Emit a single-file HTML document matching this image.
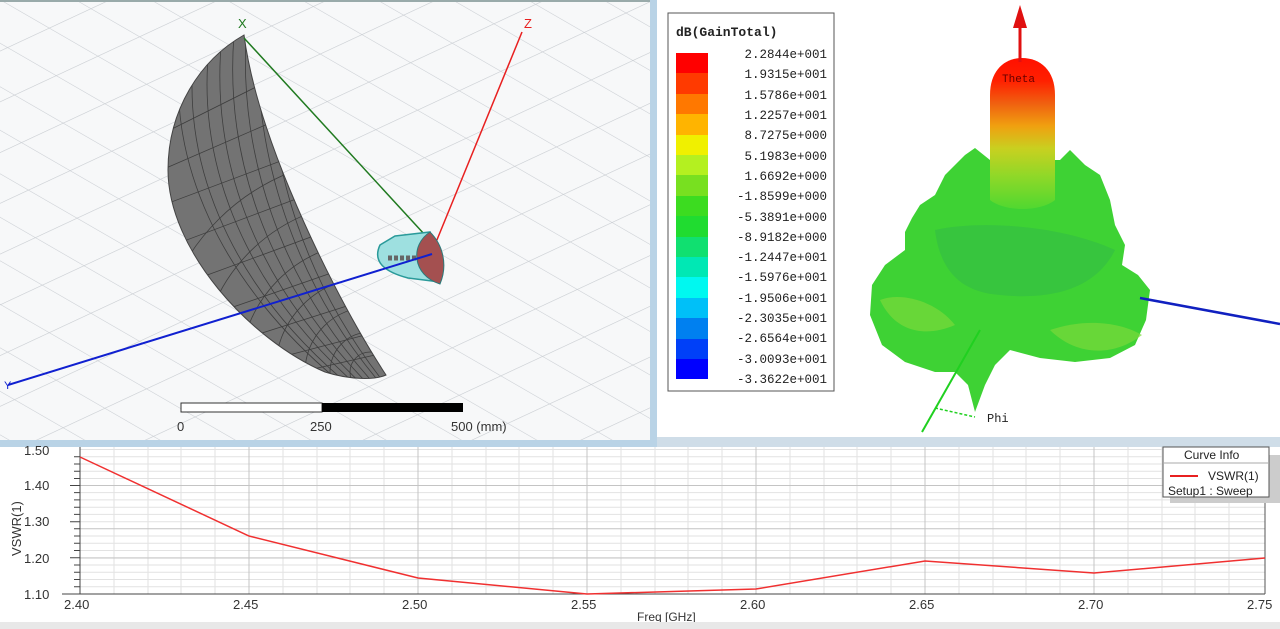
<!DOCTYPE html>
<html><head><meta charset="utf-8"><style>
html,body{margin:0;padding:0;width:1280px;height:629px;overflow:hidden;background:#fff;font-family:"Liberation Sans",sans-serif}
svg{position:absolute;left:0;top:0}
</style></head><body>
<svg width="1280" height="629" viewBox="0 0 1280 629" xmlns="http://www.w3.org/2000/svg">
<defs>
<pattern id="g" width="46" height="46" patternUnits="userSpaceOnUse" patternTransform="rotate(-25) skewX(35)">
<path d="M0 0H46M0 0V46" stroke="#c9cdd2" stroke-width="1.3" fill="none"/>
</pattern>
<clipPath id="lc"><rect x="0" y="0" width="650" height="440"/></clipPath>
<clipPath id="dc"><path d="M244 35 C200 60 168 110 168 170 C168 250 250 340 325 372 C350 380 375 380 386 375 C350 320 315 250 290 190 C265 130 250 80 244 35Z"/></clipPath>
<linearGradient id="beam" x1="0" y1="0" x2="0" y2="1">
<stop offset="0" stop-color="#ff1000"/><stop offset="0.15" stop-color="#ff2000"/>
<stop offset="0.3" stop-color="#f06010"/><stop offset="0.45" stop-color="#f0a010"/>
<stop offset="0.6" stop-color="#c8d020"/><stop offset="0.78" stop-color="#90d828"/><stop offset="1" stop-color="#50d830"/>
</linearGradient>
</defs>
<!-- left panel -->
<rect x="0" y="0" width="650" height="440" fill="#f7f8f9"/>
<rect x="0" y="0" width="650" height="440" fill="url(#g)"/>
<rect x="650" y="0" width="7" height="447" fill="#b9d3e6"/>
<rect x="0" y="440" width="657" height="7" fill="#b9d3e6"/>
<rect x="0" y="0" width="650" height="2" fill="#9aa"/>
<g clip-path="url(#lc)">
<path d="M244 35 C200 60 168 110 168 170 C168 250 250 340 325 372 C350 380 375 380 386 375 C350 320 315 250 290 190 C265 130 250 80 244 35Z" fill="#737373" stroke="#444" stroke-width="1"/>
<g stroke="#3e3e3e" stroke-width="0.8" fill="none" clip-path="url(#dc)">
<path d="M180 60 C170 150 210 280 350 390"/><path d="M195 45 C180 150 220 280 355 390"/>
<path d="M210 40 C195 150 235 280 362 390"/><path d="M222 35 C210 150 248 280 368 390"/>
<path d="M234 35 C225 150 262 280 374 390"/><path d="M246 35 C240 150 276 280 380 390"/>
<path d="M258 40 C255 150 290 280 386 390"/><path d="M270 60 C270 160 300 280 390 390"/>
<path d="M150 140 L290 70"/><path d="M150 175 L300 110"/><path d="M150 210 L310 150"/><path d="M160 250 L320 190"/><path d="M180 285 L330 230"/><path d="M210 315 L340 270"/><path d="M240 340 L350 305"/><path d="M270 360 L365 335"/><path d="M300 372 L375 355"/>
<circle cx="370" cy="372" r="20"/><circle cx="370" cy="372" r="40"/><circle cx="370" cy="372" r="65"/><circle cx="370" cy="372" r="95"/><circle cx="370" cy="372" r="130"/><circle cx="370" cy="372" r="170"/><circle cx="370" cy="372" r="215"/>
</g>
<line x1="244" y1="38" x2="425" y2="235" stroke="#207a20" stroke-width="1.5"/>
<text x="238" y="28" fill="#207a20" font-size="13">X</text>
<line x1="432" y1="252" x2="522" y2="32" stroke="#e82020" stroke-width="1.5"/>
<text x="524" y="28" fill="#e82020" font-size="13">Z</text>
<path d="M395 236 L430 232 L440 282 L408 278 C385 272 372 262 380 245Z" fill="#9ee0e0" stroke="#2a9a9a" stroke-width="1.5"/>
<path d="M388 258 h30" stroke="#666" stroke-width="5" stroke-dasharray="4 2"/>
<path d="M430 232 C410 245 412 275 440 284 C448 265 443 245 430 232Z" fill="#a45050" stroke="#2a7a7a"/>
<line x1="8" y1="385" x2="432" y2="254" stroke="#1020d0" stroke-width="2"/>
<text x="4" y="389" fill="#1020d0" font-size="11">Y</text>
</g>
<rect x="181" y="403" width="141" height="9" fill="#fff" stroke="#333"/>
<rect x="322" y="403" width="141" height="9" fill="#000"/>
<g font-size="13" fill="#333"><text x="177" y="431">0</text><text x="310" y="431">250</text><text x="451" y="431">500 (mm)</text></g>
<!-- right panel -->
<rect x="657" y="0" width="623" height="437" fill="#fff"/>
<rect x="657" y="437" width="623" height="10" fill="#cfdde8"/>
<path d="M965 155 L975 148 L990 160 L1060 160 L1070 150 L1085 165 L1100 175 L1110 200 L1115 225 L1125 245 L1122 265 L1138 275 L1150 290 L1146 320 L1135 345 L1110 358 L1075 362 L1040 358 L1010 350 L995 365 L985 385 L975 412 L968 385 L955 372 L935 372 L905 362 L882 345 L870 315 L872 285 L885 265 L905 250 L905 232 L912 218 L920 205 L935 195 L945 175 Z" fill="#3ed234"/>
<path d="M935 230 C980 220 1060 225 1115 250 C1095 290 1050 300 1000 295 C960 292 940 270 935 230Z" fill="#30b848" opacity="0.5"/>
<path d="M880 300 C900 292 935 300 955 325 C925 338 895 332 880 300Z" fill="#7ad83a" opacity="0.7"/>
<path d="M1050 330 C1085 318 1120 322 1142 335 C1112 358 1075 355 1050 330Z" fill="#7ad83a" opacity="0.7"/>
<path d="M990 200 L990 95 C990 70 1005 58 1022 58 C1040 58 1055 70 1055 95 L1055 200 C1040 212 1005 212 990 200Z" fill="url(#beam)"/>
<line x1="1020" y1="12" x2="1020" y2="62" stroke="#e01010" stroke-width="3"/>
<path d="M1013 28 L1020 5 L1027 28Z" fill="#e01010"/>
<text x="1002" y="82" font-family="Liberation Mono,monospace" font-size="11" fill="#600">Theta</text>
<line x1="1140" y1="298" x2="1280" y2="324" stroke="#1020c0" stroke-width="2.5"/>
<line x1="980" y1="330" x2="922" y2="432" stroke="#20d020" stroke-width="2"/>
<line x1="935" y1="408" x2="975" y2="417" stroke="#20d020" stroke-width="1.5" stroke-dasharray="3 2"/>
<text x="987" y="422" font-family="Liberation Mono,monospace" font-size="12" fill="#222">Phi</text>
<!-- legend -->
<rect x="668" y="13" width="166" height="378" fill="#fff" stroke="#555"/>
<text x="676" y="36" font-family="Liberation Mono,monospace" font-weight="bold" font-size="13" fill="#222">dB(GainTotal)</text>
<g>
<rect x="676" y="53" width="32" height="20" fill="#ff0000"/>
<rect x="676" y="73" width="32" height="21" fill="#ff3a00"/>
<rect x="676" y="94" width="32" height="20" fill="#ff7800"/>
<rect x="676" y="114" width="32" height="21" fill="#ffb400"/>
<rect x="676" y="135" width="32" height="20" fill="#f0f000"/>
<rect x="676" y="155" width="32" height="20" fill="#b4f020"/>
<rect x="676" y="175" width="32" height="21" fill="#78e020"/>
<rect x="676" y="196" width="32" height="20" fill="#3cdc20"/>
<rect x="676" y="216" width="32" height="21" fill="#20dc30"/>
<rect x="676" y="237" width="32" height="20" fill="#10e070"/>
<rect x="676" y="257" width="32" height="20" fill="#00e8b4"/>
<rect x="676" y="277" width="32" height="21" fill="#00f8f0"/>
<rect x="676" y="298" width="32" height="20" fill="#00c0f8"/>
<rect x="676" y="318" width="32" height="21" fill="#0080f0"/>
<rect x="676" y="339" width="32" height="20" fill="#0040f8"/>
<rect x="676" y="359" width="32" height="20" fill="#0000ff"/>
</g>
<g font-family="Liberation Mono,monospace" font-size="12.5" fill="#222" text-anchor="end">
<text x="827" y="58">2.2844e+001</text><text x="827" y="78">1.9315e+001</text><text x="827" y="99">1.5786e+001</text><text x="827" y="119">1.2257e+001</text><text x="827" y="139">8.7275e+000</text><text x="827" y="160">5.1983e+000</text><text x="827" y="180">1.6692e+000</text><text x="827" y="200">-1.8599e+000</text><text x="827" y="221">-5.3891e+000</text><text x="827" y="241">-8.9182e+000</text><text x="827" y="261">-1.2447e+001</text><text x="827" y="281">-1.5976e+001</text><text x="827" y="302">-1.9506e+001</text><text x="827" y="322">-2.3035e+001</text><text x="827" y="342">-2.6564e+001</text><text x="827" y="363">-3.0093e+001</text><text x="827" y="383">-3.3622e+001</text>
</g>
<!-- bottom chart -->
<rect x="0" y="447" width="1280" height="182" fill="#fff"/>
<g stroke="#e2e2e2" stroke-width="1">
<path d="M80 449.5H1265M80 456.8H1265M80 464H1265M80 471.3H1265M80 478.5H1265M80 492.6H1265M80 499.9H1265M80 507.2H1265M80 514.4H1265M80 521.7H1265M80 536H1265M80 543.2H1265M80 550.5H1265M80 557.7H1265M80 565H1265M80 572.2H1265M80 579.5H1265M80 586.7H1265"/>
<path d="M114 447V594M148 447V594M181 447V594M215 447V594M283 447V594M317 447V594M350 447V594M384 447V594M452 447V594M486 447V594M519 447V594M553 447V594M621 447V594M655 447V594M688 447V594M722 447V594M790 447V594M824 447V594M857 447V594M891 447V594M959 447V594M993 447V594M1026 447V594M1060 447V594M1128 447V594M1162 447V594M1195 447V594M1229 447V594"/>
</g>
<g stroke="#c4c4c4" stroke-width="1">
<path d="M80 485.5H1265M80 528.8H1265M80 558H1265"/>
<path d="M249 447V594M418 447V594M587 447V594M756 447V594M925 447V594M1094 447V594"/>
</g>
<line x1="80" y1="447" x2="80" y2="594" stroke="#444"/>
<line x1="62" y1="594" x2="1265" y2="594" stroke="#444"/>
<line x1="1265" y1="447" x2="1265" y2="594" stroke="#555"/>
<g stroke="#444"><path d="M74 456.8h6M74 464h6M74 471.3h6M74 478.5h6M70 485.5h10M74 492.6h6M74 499.9h6M74 507.2h6M74 514.4h6M70 521.7h10M74 528.8h6M74 536h6M74 543.2h6M74 550.5h6M70 557.7h10M74 565h6M74 572.2h6M74 579.5h6M74 586.7h6"/></g>
<polyline points="80,457 249,536 418,578 587,594 756,589 925,561 1094,573 1265,558" fill="none" stroke="#f03030" stroke-width="1.5"/>
<g font-size="13" fill="#333">
<text x="24" y="455">1.50</text><text x="24" y="490">1.40</text><text x="24" y="526">1.30</text><text x="24" y="563">1.20</text><text x="24" y="599">1.10</text>
<text x="64" y="609">2.40</text><text x="233" y="609">2.45</text><text x="402" y="609">2.50</text><text x="571" y="609">2.55</text><text x="740" y="609">2.60</text><text x="909" y="609">2.65</text><text x="1078" y="609">2.70</text><text x="1247" y="609">2.75</text>
<text x="637" y="621" font-size="12">Freq [GHz]</text>
<text transform="translate(21,556) rotate(-90)" font-size="13">VSWR(1)</text>
</g>
<rect x="1170" y="455" width="110" height="48" fill="#ccc"/>
<rect x="1163" y="447" width="106" height="50" fill="#fff" stroke="#555"/>
<line x1="1163" y1="463" x2="1269" y2="463" stroke="#aaa"/>
<g font-size="12" fill="#222">
<text x="1184" y="459">Curve Info</text>
<text x="1208" y="480">VSWR(1)</text>
<text x="1168" y="495">Setup1 : Sweep</text>
</g>
<line x1="1170" y1="476" x2="1198" y2="476" stroke="#e82020" stroke-width="2"/>
<rect x="0" y="622" width="1280" height="7" fill="#e8e8e8"/>
</svg>
</body></html>
